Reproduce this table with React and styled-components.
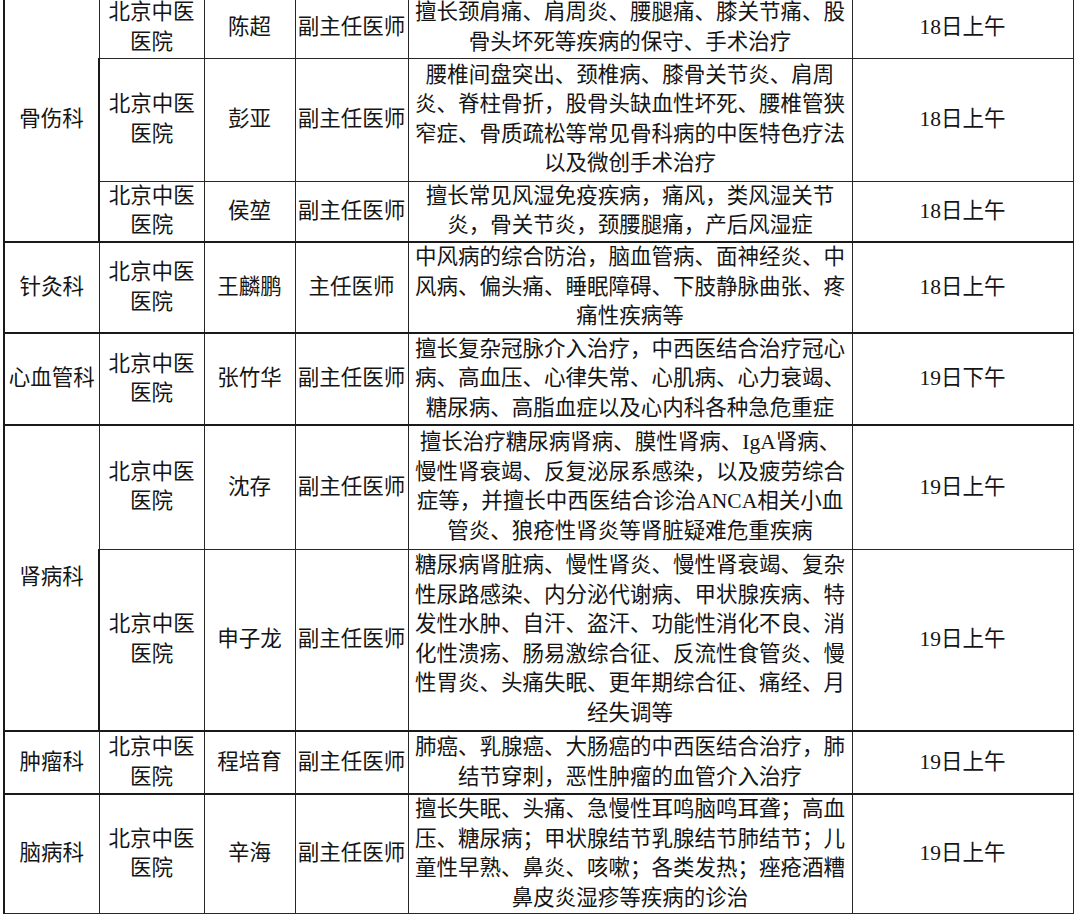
import React from "react";
import styled, { createGlobalStyle } from "styled-components";

const GlobalStyle = createGlobalStyle`
  html, body {
    margin: 0;
    padding: 0;
    background: #ffffff;
  }
  body {
    font-family: "Liberation Serif", "Noto Sans CJK SC", serif;
    color: #151515;
  }
`;

const COLS = [95, 105, 91, 113, 444, 221];

const GROUPS = [
  {
    dept: "骨伤科",
    rows: [
      {
        name: "陈超",
        title: "副主任医师",
        h: 61,
        desc: ["擅长颈肩痛、肩周炎、腰腿痛、膝关节痛、股", "骨头坏死等疾病的保守、手术治疗"],
        date: "18日上午",
      },
      {
        name: "彭亚",
        title: "副主任医师",
        h: 123,
        desc: [
          "腰椎间盘突出、颈椎病、膝骨关节炎、肩周",
          "炎、脊柱骨折，股骨头缺血性坏死、腰椎管狭",
          "窄症、骨质疏松等常见骨科病的中医特色疗法",
          "以及微创手术治疗",
        ],
        date: "18日上午",
      },
      {
        name: "侯堃",
        title: "副主任医师",
        h: 61,
        desc: ["擅长常见风湿免疫疾病，痛风，类风湿关节", "炎，骨关节炎，颈腰腿痛，产后风湿症"],
        date: "18日上午",
      },
    ],
  },
  {
    dept: "针灸科",
    rows: [
      {
        name: "王麟鹏",
        title: "主任医师",
        h: 91,
        desc: [
          "中风病的综合防治，脑血管病、面神经炎、中",
          "风病、偏头痛、睡眠障碍、下肢静脉曲张、疼",
          "痛性疾病等",
        ],
        date: "18日上午",
      },
    ],
  },
  {
    dept: "心血管科",
    rows: [
      {
        name: "张竹华",
        title: "副主任医师",
        h: 92,
        desc: [
          "擅长复杂冠脉介入治疗，中西医结合治疗冠心",
          "病、高血压、心律失常、心肌病、心力衰竭、",
          "糖尿病、高脂血症以及心内科各种急危重症",
        ],
        date: "19日下午",
      },
    ],
  },
  {
    dept: "肾病科",
    rows: [
      {
        name: "沈存",
        title: "副主任医师",
        h: 124,
        desc: [
          "擅长治疗糖尿病肾病、膜性肾病、IgA肾病、",
          "慢性肾衰竭、反复泌尿系感染，以及疲劳综合",
          "症等，并擅长中西医结合诊治ANCA相关小血",
          "管炎、狼疮性肾炎等肾脏疑难危重疾病",
        ],
        date: "19日上午",
      },
      {
        name: "申子龙",
        title: "副主任医师",
        h: 182,
        desc: [
          "糖尿病肾脏病、慢性肾炎、慢性肾衰竭、复杂",
          "性尿路感染、内分泌代谢病、甲状腺疾病、特",
          "发性水肿、自汗、盗汗、功能性消化不良、消",
          "化性溃疡、肠易激综合征、反流性食管炎、慢",
          "性胃炎、头痛失眠、更年期综合征、痛经、月",
          "经失调等",
        ],
        date: "19日上午",
      },
    ],
  },
  {
    dept: "肿瘤科",
    rows: [
      {
        name: "程培育",
        title: "副主任医师",
        h: 63,
        desc: ["肺癌、乳腺癌、大肠癌的中西医结合治疗，肺", "结节穿刺，恶性肿瘤的血管介入治疗"],
        date: "19日上午",
      },
    ],
  },
  {
    dept: "脑病科",
    rows: [
      {
        name: "辛海",
        title: "副主任医师",
        h: 118,
        desc: [
          "擅长失眠、头痛、急慢性耳鸣脑鸣耳聋；高血",
          "压、糖尿病；甲状腺结节乳腺结节肺结节；儿",
          "童性早熟、鼻炎、咳嗽；各类发热；痤疮酒糟",
          "鼻皮炎湿疹等疾病的诊治",
        ],
        date: "19日上午",
      },
    ],
  },
];

const Page = styled.div`
  padding: 0 0 0 3px;
  margin-top: -4px;
`;

const Schedule = styled.table`
  border-collapse: collapse;
  table-layout: fixed;
  width: 1069px;
  font-size: 21.5px;
  line-height: 29.5px;
`;

const Row = styled.tr`
  height: ${(p) => p.$h}px;
`;

const Cell = styled.td`
  border: 1px solid #262626;
  border-top: ${(p) => (p.$groupStart ? "2px solid #1a1a1a" : "1px solid #3a3a3a")};
  padding: 0 2px;
  text-align: center;
  vertical-align: middle;
  white-space: nowrap;
  overflow: hidden;
  &:first-child {
    border-left: 2px solid #1a1a1a;
  }
`;

const DeptCell = styled(Cell)`
  border-left: 2px solid #1a1a1a;
  border-top: 2px solid #1a1a1a;
`;

const Line = styled.span`
  display: block;
`;

const Lines = ({ items }) =>
  items.map((t, i) => <Line key={i}>{t}</Line>);

export default function App() {
  return (
    <>
      <GlobalStyle />
      <Page>
        <Schedule>
          <colgroup>
            {COLS.map((w, i) => (
              <col key={i} style={{ width: w }} />
            ))}
          </colgroup>
          <tbody>
            {GROUPS.map((g) =>
              g.rows.map((r, i) => (
                <Row key={g.dept + r.name} $h={r.h}>
                  {i === 0 && <DeptCell rowSpan={g.rows.length}>{g.dept}</DeptCell>}
                  <Cell $groupStart={i === 0}>
                    <Lines items={["北京中医", "医院"]} />
                  </Cell>
                  <Cell $groupStart={i === 0}>{r.name}</Cell>
                  <Cell $groupStart={i === 0}>{r.title}</Cell>
                  <Cell $groupStart={i === 0}>
                    <Lines items={r.desc} />
                  </Cell>
                  <Cell $groupStart={i === 0}>{r.date}</Cell>
                </Row>
              ))
            )}
          </tbody>
        </Schedule>
      </Page>
    </>
  );
}
